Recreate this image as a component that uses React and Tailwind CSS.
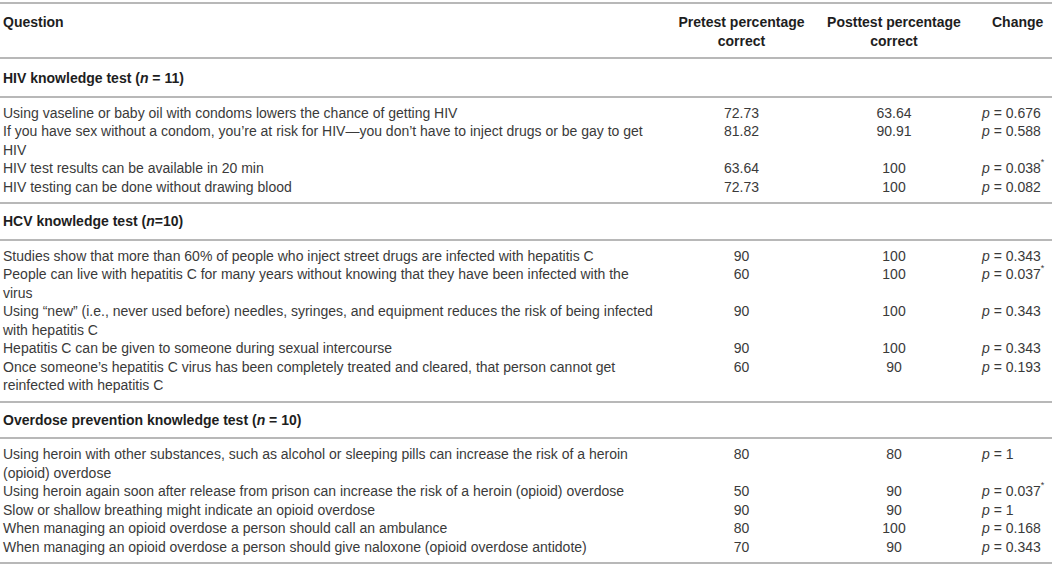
import React from 'react'

const P = ({ v, star }) => (
  <span>
    <span className="italic">p</span> = {v}
    {star && <sup className="text-[9px] align-[4px]">*</sup>}
  </span>
)

const sections = [
  {
    pad: 'pt-[10px] pb-[8px]',
    title: (
      <>
        HIV knowledge test (<span className="italic">n</span> = 11)
      </>
    ),
    rows: [
      ['Using vaseline or baby oil with condoms lowers the chance of getting HIV', '72.73', '63.64', '0.676'],
      [
        ['If you have sex without a condom, you’re at risk for HIV—you don’t have to inject drugs or be gay to get', 'HIV'],
        '81.82',
        '90.91',
        '0.588',
      ],
      ['HIV test results can be available in 20 min', '63.64', '100', '0.038', true],
      ['HIV testing can be done without drawing blood', '72.73', '100', '0.082'],
    ],
  },
  {
    pad: 'pt-[8px] pb-[8px]',
    title: (
      <>
        HCV knowledge test (<span className="italic">n</span>=10)
      </>
    ),
    rows: [
      ['Studies show that more than 60% of people who inject street drugs are infected with hepatitis C', '90', '100', '0.343'],
      [
        ['People can live with hepatitis C for many years without knowing that they have been infected with the', 'virus'],
        '60',
        '100',
        '0.037',
        true,
      ],
      [
        ['Using “new” (i.e., never used before) needles, syringes, and equipment reduces the risk of being infected', 'with hepatitis C'],
        '90',
        '100',
        '0.343',
      ],
      ['Hepatitis C can be given to someone during sexual intercourse', '90', '100', '0.343'],
      [
        ['Once someone’s hepatitis C virus has been completely treated and cleared, that person cannot get', 'reinfected with hepatitis C'],
        '60',
        '90',
        '0.193',
      ],
    ],
  },
  {
    pad: 'pt-[8px] pb-[8px]',
    title: (
      <>
        Overdose prevention knowledge test (<span className="italic">n</span> = 10)
      </>
    ),
    rows: [
      [
        ['Using heroin with other substances, such as alcohol or sleeping pills can increase the risk of a heroin', '(opioid) overdose'],
        '80',
        '80',
        '1',
      ],
      ['Using heroin again soon after release from prison can increase the risk of a heroin (opioid) overdose', '50', '90', '0.037', true],
      ['Slow or shallow breathing might indicate an opioid overdose', '90', '90', '1'],
      ['When managing an opioid overdose a person should call an ambulance', '80', '100', '0.168'],
      ['When managing an opioid overdose a person should give naloxone (opioid overdose antidote)', '70', '90', '0.343'],
    ],
  },
]

export default function App() {
  return (
    <div className="w-[1055px] h-[573px] bg-white pt-[2px] font-['Liberation_Sans',Arial,sans-serif] text-[14px] leading-[18.5px] text-[#3a3a3a]">
      <table className="w-[1052px] table-fixed border-collapse">
        <colgroup>
          <col className="w-[668px]" />
          <col className="w-[147px]" />
          <col className="w-[158px]" />
          <col className="w-[79px]" />
        </colgroup>
        <thead>
          <tr className="border-y-2 border-[#b8b8b8] font-bold text-[#1e1e1e]">
            <th className="text-left align-top pl-[3px] pt-[9px] pb-[7px] font-bold">Question</th>
            <th className="text-center align-top pt-[9px] pb-[7px] font-bold">
              Pretest percentage
              <br />
              correct
            </th>
            <th className="text-center align-top pt-[9px] pb-[7px] font-bold">
              Posttest percentage
              <br />
              correct
            </th>
            <th className="text-left align-top pl-[19px] pt-[9px] pb-[7px] font-bold">Change</th>
          </tr>
        </thead>
        {sections.map((s, i) => (
          <tbody key={i} className="border-b-2 border-[#b8b8b8]">
            <tr className="border-b-2 border-[#b8b8b8]">
              <td colSpan={4} className={`pl-[3px] font-bold text-[#1e1e1e] ${s.pad}`}>
                {s.title}
              </td>
            </tr>
            {s.rows.map((r, j) => {
              const first = j === 0
              const last = j === s.rows.length - 1
              const pad = `${first ? 'pt-[6px]' : ''} ${last ? 'pb-[6px]' : ''}`
              return (
                <tr key={j}>
                  <td className={`pl-[3px] align-top whitespace-nowrap ${pad}`}>
                    {Array.isArray(r[0]) ? (
                      <>
                        {r[0][0]}
                        <br />
                        {r[0][1]}
                      </>
                    ) : (
                      r[0]
                    )}
                  </td>
                  <td className={`text-center align-top ${pad}`}>{r[1]}</td>
                  <td className={`text-center align-top ${pad}`}>{r[2]}</td>
                  <td className={`pl-[9px] align-top whitespace-nowrap ${pad}`}>
                    <P v={r[3]} star={r[4]} />
                  </td>
                </tr>
              )
            })}
          </tbody>
        ))}
      </table>
    </div>
  )
}
